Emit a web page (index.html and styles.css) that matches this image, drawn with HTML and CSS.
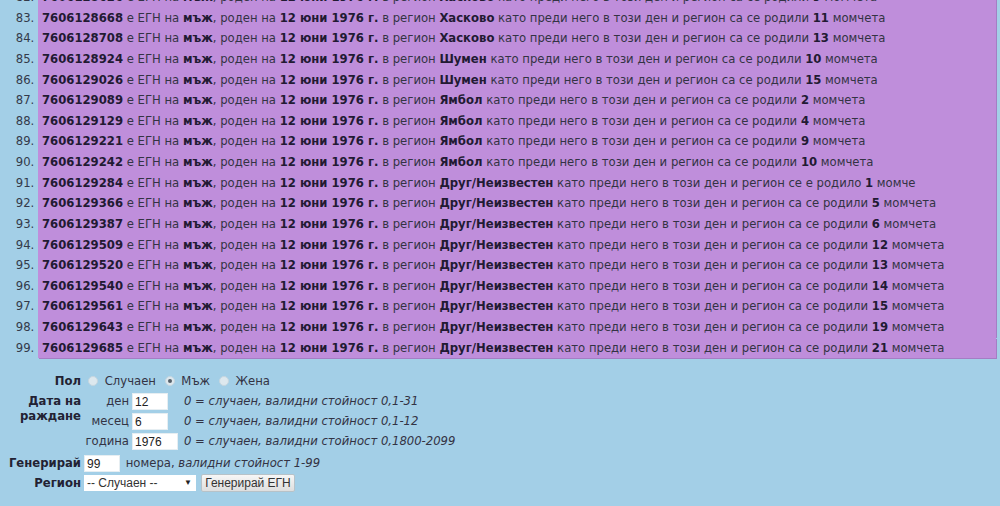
FILE: index.html
```html
<!DOCTYPE html>
<html lang="bg">
<head>
<meta charset="utf-8">
<title>Генератор на ЕГН</title>
<link rel="stylesheet" href="styles.css">
</head>
<body>
<div class="page">
  <ol class="results" start="82">
    <li><b>7606128626</b> е ЕГН на <b>мъж</b>, роден на <b>12 юни 1976 г.</b> в регион <b>Хасково</b> като преди него в този ден и регион са се родили <b>9</b> момчета</li>
    <li><b>7606128668</b> е ЕГН на <b>мъж</b>, роден на <b>12 юни 1976 г.</b> в регион <b>Хасково</b> като преди него в този ден и регион са се родили <b>11</b> момчета</li>
    <li><b>7606128708</b> е ЕГН на <b>мъж</b>, роден на <b>12 юни 1976 г.</b> в регион <b>Хасково</b> като преди него в този ден и регион са се родили <b>13</b> момчета</li>
    <li><b>7606128924</b> е ЕГН на <b>мъж</b>, роден на <b>12 юни 1976 г.</b> в регион <b>Шумен</b> като преди него в този ден и регион са се родили <b>10</b> момчета</li>
    <li><b>7606129026</b> е ЕГН на <b>мъж</b>, роден на <b>12 юни 1976 г.</b> в регион <b>Шумен</b> като преди него в този ден и регион са се родили <b>15</b> момчета</li>
    <li><b>7606129089</b> е ЕГН на <b>мъж</b>, роден на <b>12 юни 1976 г.</b> в регион <b>Ямбол</b> като преди него в този ден и регион са се родили <b>2</b> момчета</li>
    <li><b>7606129129</b> е ЕГН на <b>мъж</b>, роден на <b>12 юни 1976 г.</b> в регион <b>Ямбол</b> като преди него в този ден и регион са се родили <b>4</b> момчета</li>
    <li><b>7606129221</b> е ЕГН на <b>мъж</b>, роден на <b>12 юни 1976 г.</b> в регион <b>Ямбол</b> като преди него в този ден и регион са се родили <b>9</b> момчета</li>
    <li><b>7606129242</b> е ЕГН на <b>мъж</b>, роден на <b>12 юни 1976 г.</b> в регион <b>Ямбол</b> като преди него в този ден и регион са се родили <b>10</b> момчета</li>
    <li><b>7606129284</b> е ЕГН на <b>мъж</b>, роден на <b>12 юни 1976 г.</b> в регион <b>Друг/Неизвестен</b> като преди него в този ден и регион се е родило <b>1</b> момче</li>
    <li><b>7606129366</b> е ЕГН на <b>мъж</b>, роден на <b>12 юни 1976 г.</b> в регион <b>Друг/Неизвестен</b> като преди него в този ден и регион са се родили <b>5</b> момчета</li>
    <li><b>7606129387</b> е ЕГН на <b>мъж</b>, роден на <b>12 юни 1976 г.</b> в регион <b>Друг/Неизвестен</b> като преди него в този ден и регион са се родили <b>6</b> момчета</li>
    <li><b>7606129509</b> е ЕГН на <b>мъж</b>, роден на <b>12 юни 1976 г.</b> в регион <b>Друг/Неизвестен</b> като преди него в този ден и регион са се родили <b>12</b> момчета</li>
    <li><b>7606129520</b> е ЕГН на <b>мъж</b>, роден на <b>12 юни 1976 г.</b> в регион <b>Друг/Неизвестен</b> като преди него в този ден и регион са се родили <b>13</b> момчета</li>
    <li><b>7606129540</b> е ЕГН на <b>мъж</b>, роден на <b>12 юни 1976 г.</b> в регион <b>Друг/Неизвестен</b> като преди него в този ден и регион са се родили <b>14</b> момчета</li>
    <li><b>7606129561</b> е ЕГН на <b>мъж</b>, роден на <b>12 юни 1976 г.</b> в регион <b>Друг/Неизвестен</b> като преди него в този ден и регион са се родили <b>15</b> момчета</li>
    <li><b>7606129643</b> е ЕГН на <b>мъж</b>, роден на <b>12 юни 1976 г.</b> в регион <b>Друг/Неизвестен</b> като преди него в този ден и регион са се родили <b>19</b> момчета</li>
    <li><b>7606129685</b> е ЕГН на <b>мъж</b>, роден на <b>12 юни 1976 г.</b> в регион <b>Друг/Неизвестен</b> като преди него в този ден и регион са се родили <b>21</b> момчета</li>
  </ol>

  <form class="gen-form">
    <table class="form-table">
      <tr>
        <th>Пол</th>
        <td class="sex">
          <label><input type="radio" name="sex" class="radio"> Случаен</label>
          <label><input type="radio" name="sex" class="radio" checked> Мъж</label>
          <label><input type="radio" name="sex" class="radio"> Жена</label>
        </td>
      </tr>
      <tr>
        <th class="date-label">Дата на раждане</th>
        <td>
          <table class="date-table">
            <tr>
              <td class="unit">ден</td>
              <td class="field"><input type="text" class="txt short" value="12"></td>
              <td class="hint"><i>0 = случаен, валидни стойност 0,1-31</i></td>
            </tr>
            <tr>
              <td class="unit">месец</td>
              <td class="field"><input type="text" class="txt short" value="6"></td>
              <td class="hint"><i>0 = случаен, валидни стойност 0,1-12</i></td>
            </tr>
            <tr>
              <td class="unit">година</td>
              <td class="field"><input type="text" class="txt long" value="1976"></td>
              <td class="hint"><i>0 = случаен, валидни стойност 0,1800-2099</i></td>
            </tr>
          </table>
        </td>
      </tr>
      <tr class="count-row">
        <th>Генерирай</th>
        <td><input type="text" class="txt short" value="99"> <span class="count-text">номера, <i>валидни стойност 1-99</i></span></td>
      </tr>
      <tr>
        <th>Регион</th>
        <td class="region">
          <span class="select">-- Случаен --<span class="arrow">▼</span></span>
          <button type="button" class="btn">Генерирай ЕГН</button>
        </td>
      </tr>
    </table>
  </form>
</div>
</body>
</html>
```

FILE: styles.css
```css
html, body {
  margin: 0;
  padding: 0;
  background: #a3cfe7;
}

body {
  font-family: "DejaVu Sans", Verdana, sans-serif;
  font-size: 11.65px;
  color: #333344;
  overflow: hidden;
}

.page {
  margin-top: -13px;
}

/* result list */
.results {
  margin: 0 4px 0 0;
  padding: 0 0 0 38px;
}

.results li {
  background: #bf8edb;
  line-height: 20.625px;
  padding-left: 4px;
  white-space: nowrap;
  box-shadow: 1px 0 0 #a57dc4;
}

.results li:last-child {
  box-shadow: 1px 1px 0 #a57dc4;
}

.results li::marker {
  color: #333a4a;
}

.results b {
  color: #221a33;
}

/* generator form */
.gen-form {
  margin: 13px 0 0 0;
}

.form-table {
  border-collapse: collapse;
}

.form-table > tbody > tr > th {
  text-align: right;
  vertical-align: top;
  width: 73px;
  padding: 0 3px 0 8px;
  color: #222233;
  line-height: 20px;
}

.form-table > tbody > tr > td {
  padding: 0;
  vertical-align: top;
  line-height: 20px;
}

.date-label {
  line-height: 15px !important;
  padding-top: 3px !important;
}

.sex label {
  margin-right: 1px;
}

.radio {
  appearance: none;
  width: 10px;
  height: 10px;
  border-radius: 50%;
  border: 1px solid #c6d6e0;
  background: #dde8ee;
  margin: 0 3px 0 4px;
  vertical-align: -1px;
  position: relative;
}

.radio:checked::after {
  content: "";
  position: absolute;
  left: 2px;
  top: 2px;
  width: 4px;
  height: 4px;
  border-radius: 50%;
  background: #55606a;
}

.date-table {
  border-collapse: collapse;
}

.date-table td {
  padding: 0;
  height: 20px;
  vertical-align: middle;
}

.date-table .unit {
  width: 45px;
  text-align: right;
  padding-right: 3px;
}

.date-table .field {
  width: 52px;
}

.hint {
  white-space: nowrap;
}

.txt {
  font-family: "Liberation Sans", Arial, sans-serif;
  font-size: 12px;
  color: #222;
  border: 1px solid #e6eef2;
  background: #fff;
  height: 17px;
  box-sizing: border-box;
  padding: 0 2px;
  margin: 0;
  vertical-align: middle;
}

.txt.short { width: 36px; }
.txt.long { width: 46px; }

.count-row td, .count-row th {
  padding-top: 2px !important;
}

.count-text {
  margin-left: 2px;
}

.region {
  display: flex;
  align-items: center;
  gap: 5px;
  height: 20px;
}

.select {
  display: inline-flex;
  align-items: center;
  justify-content: space-between;
  width: 112px;
  height: 16px;
  box-sizing: border-box;
  background: #fff;
  padding: 0 4px 0 3px;
  font-family: "Liberation Sans", Arial, sans-serif;
  font-size: 12px;
  color: #333;
}

.arrow {
  font-size: 8px;
  color: #222;
}

.btn {
  font-family: "Liberation Sans", Arial, sans-serif;
  font-size: 12px;
  color: #333;
  height: 18px;
  width: 94px;
  padding: 0;
  border: 1px solid #b7c2c8;
  border-radius: 2px;
  background: linear-gradient(#f6f6f6, #dedede);
}
```
